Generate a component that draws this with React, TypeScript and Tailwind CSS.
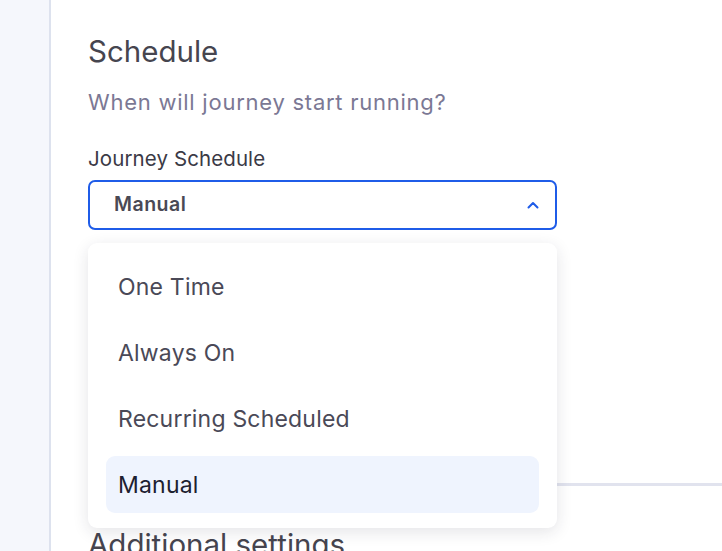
const items = ["One Time", "Always On", "Recurring Scheduled", "Manual"];

export default function App() {
  const selected = "Manual";
  return (
    <div
      className="flex w-[722px] h-[551px] overflow-hidden bg-white"
      style={{ fontFamily: "Inter, 'Noto Sans', sans-serif" }}
    >
      <aside className="w-[51px] shrink-0 bg-[#f5f7fc] border-r-2 border-[#dde2ee]" />
      <main className="flex-1 pl-[37px] pt-[33px]">
        <h2 className="text-[29.5px] leading-[36px] text-[#46454f]">Schedule</h2>
        <p className="mt-[19px] text-[22px] leading-[28px] tracking-[0.75px] text-[#7b7894]">When will journey start running?</p>
        <label className="block mt-[30px] text-[20.5px] leading-[26px] tracking-[0.1px] text-[#3b3a46]">Journey Schedule</label>
        <div className="relative mt-[8px] w-[469px]">
          <button className="flex items-center justify-between w-full h-[50px] pl-[24px] pr-[16px] rounded-[7px] border-2 border-[#1f5ce8] bg-white">
            <span className="text-[19.5px] font-semibold tracking-[0.5px] text-[#4a4955]">{selected}</span>
            <svg width="12" height="8" viewBox="0 0 12 8" fill="none">
              <path d="M1.5 6.5L6 2l4.5 4.5" stroke="#1f5ce8" strokeWidth="2" strokeLinecap="round" strokeLinejoin="round" />
            </svg>
          </button>
          <ul className="absolute left-0 right-0 top-[63px] z-10 flex flex-col gap-[9px] px-[18px] py-[15px] rounded-[9px] bg-white shadow-[0_4px_16px_rgba(30,35,60,0.12)]">
            {items.map((item) => (
              <li
                key={item}
                className={
                  item === selected
                    ? "flex items-center h-[57px] pl-[12px] pt-[2px] rounded-[9px] bg-[#eff4fe] text-[23px] tracking-[0.2px] text-[#1d2030]"
                    : "flex items-center h-[57px] pl-[12px] pt-[2px] rounded-[9px] text-[23px] tracking-[0.2px] text-[#4a4957]"
                }
              >
                {item}
              </li>
            ))}
          </ul>
        </div>
        <div className="mt-[253px] h-[3px] bg-[#e1e3ee]" />
        <h2 className="mt-[40px] text-[29.5px] leading-[36px] text-[#46454f]">Additional settings</h2>
      </main>
    </div>
  );
}
